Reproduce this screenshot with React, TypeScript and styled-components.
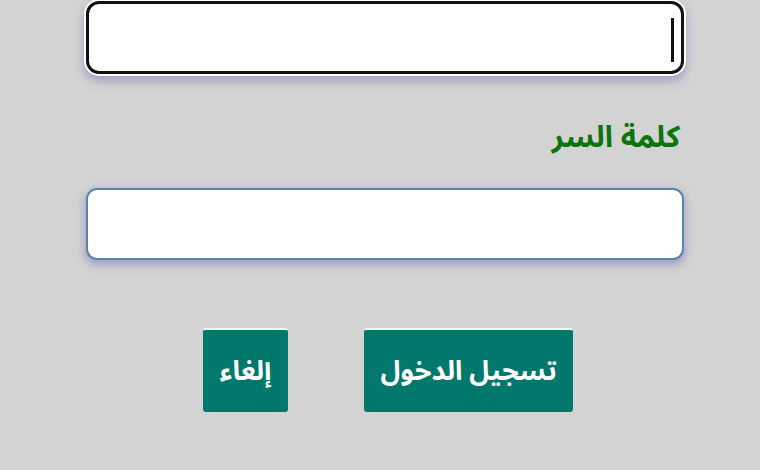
import React from "react";
import styled, { createGlobalStyle } from "styled-components";

const Global = createGlobalStyle`
  html, body { margin: 0; padding: 0; background: #d3d3d3; }
  body { font-family: "Noto Sans Arabic", "Noto Naskh Arabic", "Noto Sans Arabic UI", "Noto Kufi Arabic", "Noto Sans", sans-serif; }
`;

const Page = styled.div`
  direction: rtl;
  width: 760px;
  height: 470px;
  box-sizing: border-box;
  padding: 0 76px 0 76px;
  display: flex;
  flex-direction: column;
  overflow: hidden;
`;

const Field = styled.div`
  position: relative;
  width: 598px;
`;

const TextInput = styled.input<{ $focused?: boolean }>`
  display: block;
  box-sizing: border-box;
  width: 598px;
  height: ${(p) => (p.$focused ? "73px" : "72px")};
  margin: 0;
  padding: 0 12px;
  background: #fff;
  font-family: inherit;
  font-size: 26px;
  outline: none;
  border: ${(p) => (p.$focused ? "3.5px solid #111" : "2px solid #5a83ae")};
  border-radius: ${(p) => (p.$focused ? "13px" : "11px")};
  box-shadow: ${(p) =>
    p.$focused
      ? "0 0 0 2px #ffffff, 0 5px 10px 2px rgba(95, 95, 185, 0.45)"
      : "0 4px 9px 1px rgba(95, 95, 185, 0.45)"};
`;

const Caret = styled.span`
  position: absolute;
  top: 17px;
  right: 10px;
  width: 3px;
  height: 44px;
  background: #111;
`;

const Label = styled.label`
  margin: 45px 4px 0 0;
  height: 38px;
  color: #0b740b;
  font-size: 30px;
  font-weight: 700;
  line-height: 38px;
`;

const Spacer = styled.div<{ $h: number }>`
  height: ${(p) => p.$h}px;
`;

const Actions = styled.div`
  display: flex;
  flex-direction: row;
  gap: 76px;
  margin: 68px 111px 0 0;
`;

const Button = styled.button<{ $w: number }>`
  width: ${(p) => p.$w}px;
  height: 84px;
  box-sizing: border-box;
  background: #02786c;
  color: #fff;
  font-family: inherit;
  font-size: 27px;
  font-weight: 700;
  border: none;
  border-top: 2px solid #f2f5f4;
  border-radius: 3px;
  padding: 0;
  cursor: pointer;
`;

export default function App() {
  return (
    <>
      <Global />
      <Page>
        <Spacer $h={1} />
        <Field>
          <TextInput $focused type="text" />
          <Caret />
        </Field>
        <Label>كلمة السر</Label>
        <Spacer $h={31} />
        <Field>
          <TextInput type="password" />
        </Field>
        <Actions>
          <Button $w={209}>تسجيل الدخول</Button>
          <Button $w={85}>إلغاء</Button>
        </Actions>
      </Page>
    </>
  );
}
